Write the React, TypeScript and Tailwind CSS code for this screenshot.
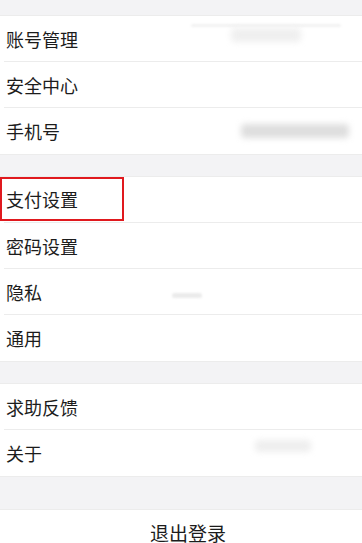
import React from 'react';

const font = { fontFamily: '"Noto Sans CJK SC", "Noto Sans", sans-serif' };

function Row({
  label,
  last,
  boxed,
  children,
}: {
  label: string;
  last?: boolean;
  boxed?: boolean;
  children?: React.ReactNode;
}) {
  return (
    <div className="h-[46px] bg-white pl-[4px]">
      <div className={`flex h-full items-center ${last ? '' : 'border-b border-[#ececec]'}`}>
        {boxed ? (
          <div className="-ml-[4px] flex h-[44px] w-[124px] items-center self-start border-2 border-[#e0191e] pl-[4px]">
            <span className="text-[18px] leading-none text-[#1c1c1c]">{label}</span>
          </div>
        ) : (
          <span className="pl-[2px] text-[18px] leading-none text-[#1c1c1c]">{label}</span>
        )}
        {children}
      </div>
    </div>
  );
}

function Blur({ className }: { className: string }) {
  return <div className={`rounded ${className}`} />;
}

export default function App() {
  return (
    <div className="h-[543px] w-[362px] overflow-hidden bg-[#f3f3f5]" style={font}>
      <div className="h-[16px] border-b border-[#ececec]" />
      <Row label="账号管理">
        <div className="ml-[113px] flex flex-col items-center self-start pt-[8px]">
          <Blur className="h-[3px] w-[150px] bg-[#f2f2f2] blur-[1px]" />
          <Blur className="mt-[1px] h-[14px] w-[70px] bg-[#efefef] blur-[3px]" />
        </div>
      </Row>
      <Row label="安全中心" />
      <Row label="手机号" last>
        <Blur className="ml-[181px] h-[14px] w-[108px] bg-[#dedede] blur-[3px]" />
      </Row>
      <div className="h-[23px] border-y border-[#ececec]" />
      <Row label="支付设置" boxed />
      <Row label="密码设置" />
      <Row label="隐私">
        <Blur className="ml-[130px] mt-[8px] h-[5px] w-[30px] bg-[#ebebeb] blur-[1px]" />
      </Row>
      <Row label="通用" last />
      <div className="h-[23px] border-y border-[#ececec]" />
      <Row label="求助反馈" />
      <Row label="关于" last>
        <Blur className="mb-[14px] ml-[213px] h-[12px] w-[56px] bg-[#eeeeee] blur-[3px]" />
      </Row>
      <div className="h-[34px] border-y border-[#ececec]" />
      <div className="flex h-[50px] justify-center bg-white pt-[13px]">
        <span className="pl-[14px] text-[19px] leading-none text-[#1c1c1c]">退出登录</span>
      </div>
    </div>
  );
}
